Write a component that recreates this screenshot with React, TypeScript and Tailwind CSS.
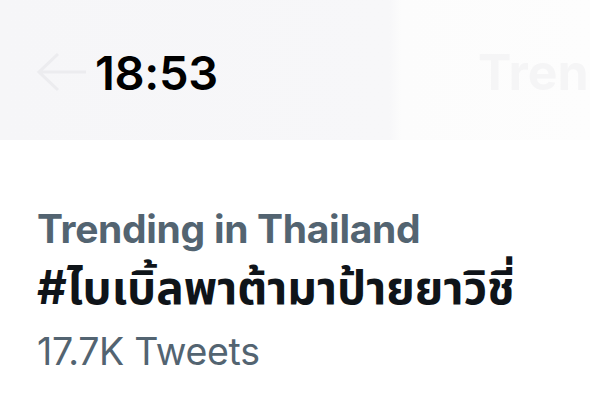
export default function App() {
  return (
    <div className="flex h-[413px] w-[590px] flex-col bg-white font-['Inter','Noto_Sans','Noto_Sans_Thai',sans-serif]">
      <div className="flex h-[140px] shrink-0 items-center overflow-hidden bg-[linear-gradient(90deg,#f6f6f8_0%,#f7f7f9_66%,#fcfcfc_68%,#fdfdfd_100%)]">
        <div className="flex w-[395px] shrink-0 items-center pt-[4px]">
          <svg width="54" height="42" viewBox="0 0 54 42" className="ml-[34px] shrink-0">
            <path d="M24 3 L5 21 L24 39 M5 21 H52" fill="none" stroke="#ececef" strokeWidth="3" />
          </svg>
          <span className="ml-[7px] text-[47px] font-semibold leading-none tracking-[-0.3px] text-black">18:53</span>
        </div>
        <span className="ml-[83px] shrink-0 pt-[4px] text-[50px] font-bold leading-none text-[#f5f5f6]">Trending</span>
      </div>
      <div className="flex flex-col pl-[37px] pt-[64px]">
        <div className="text-[39px] font-bold leading-[50px] tracking-[-0.3px] text-[#536471]">Trending in Thailand</div>
        <div className="text-[46px] font-bold leading-[66px] text-[#0f1419]">#ไบเบิ้ลพาต้ามาป้ายยาวิชี่</div>
        <div className="mt-[8px] text-[37.5px] font-normal leading-[48px] tracking-[-0.3px] text-[#536471]">17.7K Tweets</div>
      </div>
    </div>
  );
}
